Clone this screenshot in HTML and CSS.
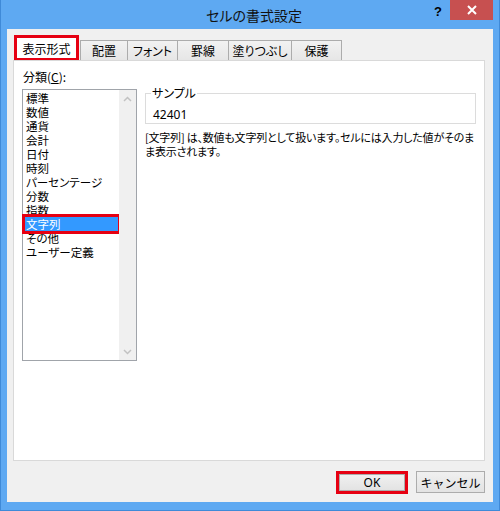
FILE: index.html
```
<!DOCTYPE html>
<html lang="ja">
<head>
    <meta charset="UTF-8">
    <title>セルの書式設定</title>
    <link rel="stylesheet" href="styles.css">
</head>
<body>
    <div class="window">
        <div class="titlebar">
            <span class="title">セルの書式設定</span>
            <span class="help">?</span>
            <span class="close">
                <svg width="10" height="10" viewBox="0 0 10 10"><path d="M1 1 L9 9 M9 1 L1 9" stroke="#fff" stroke-width="2"/></svg>
            </span>
        </div>
        <div class="client">
            <div class="tabs">
                <div class="tab active">表示形式</div>
                <div class="tab w48">配置</div>
                <div class="tab w51">フォント</div>
                <div class="tab w52">罫線</div>
                <div class="tab w64">塗りつぶし</div>
                <div class="tab w51">保護</div>
            </div>
            <div class="panel">
                <div class="left-col">
                    <div class="label">分類(<u>C</u>):</div>
                    <div class="listbox">
                        <div class="items">
                            <div class="item">標準</div>
                            <div class="item">数値</div>
                            <div class="item">通貨</div>
                            <div class="item">会計</div>
                            <div class="item">日付</div>
                            <div class="item">時刻</div>
                            <div class="item">パーセンテージ</div>
                            <div class="item">分数</div>
                            <div class="item">指数</div>
                            <div class="item selected">文字列</div>
                            <div class="item">その他</div>
                            <div class="item">ユーザー定義</div>
                        </div>
                        <div class="scrollbar">
                            <svg width="9" height="6" viewBox="0 0 9 6"><path d="M1 5 L4.5 1.5 L8 5" stroke="#c2c2c2" stroke-width="1.5" fill="none"/></svg>
                            <svg width="9" height="6" viewBox="0 0 9 6"><path d="M1 1 L4.5 4.5 L8 1" stroke="#c2c2c2" stroke-width="1.5" fill="none"/></svg>
                        </div>
                    </div>
                </div>
                <div class="right-col">
                    <fieldset class="sample">
                        <legend>サンプル</legend>
                        <div class="sample-value">42401</div>
                    </fieldset>
                    <p class="desc">[文字列] は、数値も文字列として扱います。セルには入力した値がそのま<br>ま表示されます。</p>
                </div>
            </div>
            <div class="footer">
                <div class="mark"><button class="btn ok">OK</button></div>
                <button class="btn cancel">キャンセル</button>
            </div>
        </div>
    </div>
</body>
</html>
```

FILE: styles.css
```
body {
	margin: 0;
	font-family: "Noto Sans CJK JP", "Noto Sans", sans-serif;
	font-feature-settings: "palt";
	font-size: 12px;
	color: #000;
}

.window {
	width: 500px;
	height: 511px;
	box-sizing: border-box;
	background: #5ea9f2;
	border: 1px solid #3f8ad8;
	border-top: none;
	display: flex;
	flex-direction: column;
}

.titlebar {
	height: 29px;
	position: relative;
	display: flex;
	justify-content: center;
	align-items: center;
}

.title {
	font-size: 14px;
	padding-left: 8px;
	color: #111;
}

.help {
	position: absolute;
	left: 433px;
	top: 4px;
	font-family: "Liberation Sans", sans-serif;
	font-weight: bold;
	font-size: 13px;
}

.close {
	position: absolute;
	left: 449px;
	top: 0;
	width: 43px;
	height: 20px;
	background: #c75050;
	display: flex;
	justify-content: center;
	align-items: center;
}

.client {
	margin: 0 6px;
	height: 473px;
	background: #f0f0f0;
	display: flex;
	flex-direction: column;
}

.tabs {
	display: flex;
	align-items: flex-end;
	height: 25px;
	padding: 6px 0 0 7px;
	position: relative;
	z-index: 1;
}

.tab {
	height: 20px;
	box-sizing: border-box;
	border: 1px solid #acacac;
	border-bottom: none;
	margin-left: -1px;
	background: linear-gradient(#f2f2f2, #e6e6e6);
	display: flex;
	justify-content: center;
	align-items: center;
	font-size: 12px;
}

.tab.active {
	height: 25px;
	width: 65px;
	margin-left: 0;
	margin-right: 2px;
	background: #fff;
	border: 3px solid #e60012;
	border-bottom-width: 2px;
}

.w48 { width: 48px; }
.w51 { width: 51px; }
.w52 { width: 52px; }
.w64 { width: 64px; }

.panel {
	margin: 0 8px 0 6px;
	height: 401px;
	box-sizing: border-box;
	background: #fff;
	border: 1px solid #d9d9d9;
	display: flex;
}

.left-col {
	padding: 8px 0 0 8px;
	width: 115px;
}

.label {
	padding-left: 1px;
	line-height: 15px;
	height: 20px;
}

.listbox {
	height: 272px;
	box-sizing: border-box;
	border: 1px solid #a0a4aa;
	display: flex;
}

.items {
	flex: 1;
	padding: 1px 0 0 2px;
}

.item {
	width: 92px;
	height: 14px;
	line-height: 14px;
	font-size: 11.5px;
	padding-left: 1px;
	white-space: nowrap;
}

.item.selected {
	background: #3399ff;
	color: #fff;
	outline: 3px solid #e60012;
}

.scrollbar {
	width: 17px;
	background: #f0f0f0;
	display: flex;
	flex-direction: column;
	justify-content: space-between;
	align-items: center;
	padding: 6px 0 5px;
}

.right-col {
	padding: 26px 0 0 8px;
	flex: 1;
}

.sample {
	margin: 0;
	width: 331px;
	height: 37px;
	box-sizing: border-box;
	border: 1px solid #dcdcdc;
	padding: 0 0 0 7px;
}

.sample legend {
	padding: 0 1px;
	margin-left: -2px;
	line-height: 12px;
	font-size: 12px;
}

.sample-value {
	font-family: "Noto Sans", sans-serif;
	font-size: 12px;
	line-height: 14px;
	padding-top: 9px;
}

.desc {
	margin: 6px 0 0;
	font-size: 11px;
	line-height: 14px;
	letter-spacing: -0.2px;
	white-space: nowrap;
}

.footer {
	flex: 1;
	display: flex;
	justify-content: flex-end;
	align-items: flex-start;
	padding: 10px 8px 0 0;
	gap: 8px;
}

.mark {
	border: 3px solid #e60012;
	display: flex;
}

.btn {
	font-family: inherit;
	font-size: 12px;
	background: linear-gradient(#f0f0f0, #e3e3e3);
	border: 1px solid #acacac;
	padding: 0;
	height: 22px;
	width: 69px;
}

.ok {
	width: 66px;
	height: 17px;
	font-family: "Noto Sans", sans-serif;
	line-height: 14px;
}
```
